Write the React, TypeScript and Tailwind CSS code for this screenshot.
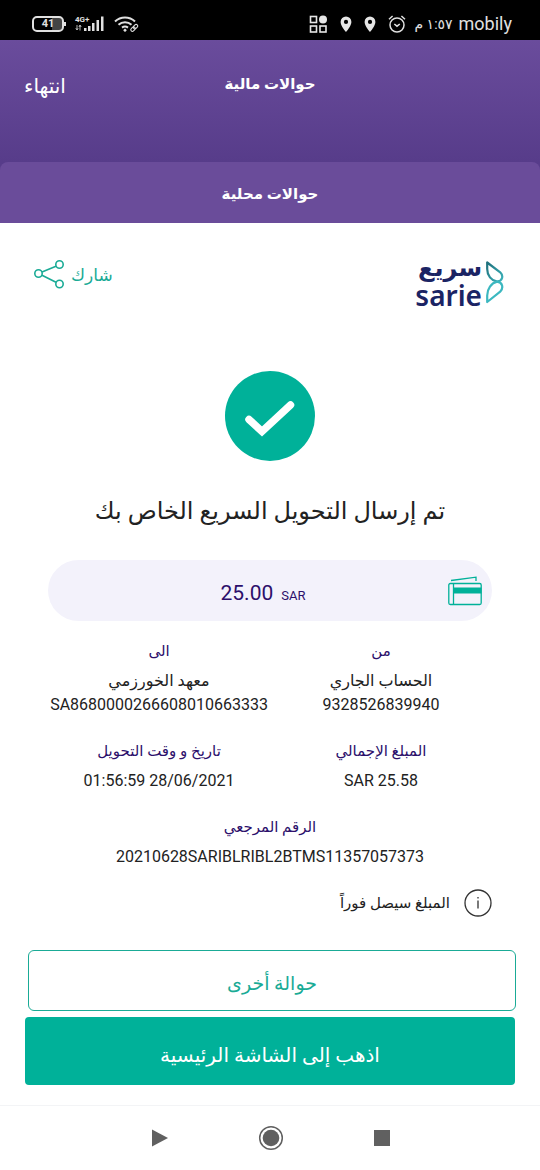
import React from 'react'

const details = [
    { label: 'من', lines: ['الحساب الجاري', '9328526839940'] },
    { label: 'الى', lines: ['معهد الخورزمي', 'SA8680000266608010663333'] },
    { label: 'المبلغ الإجمالي', lines: ['SAR 25.58'] },
    { label: 'تاريخ و وقت التحويل', lines: ['01:56:59 28/06/2021'] },
]

const Pin = () => (
    <svg width="12" height="17" viewBox="0 0 12 17" fill="#e6e6e6" aria-hidden="true">
        <path fillRule="evenodd" d="M6 0.5a5.4 5.4 0 0 0-5.4 5.4C0.6 9.8 6 16 6 16s5.4-6.2 5.4-10.1A5.4 5.4 0 0 0 6 0.5zM6 3.8a2.1 2.1 0 1 1 0 4.2 2.1 2.1 0 0 1 0-4.2z" />
    </svg>
)

const StatusBar = () => (
    <div dir="ltr" className="flex h-10 items-center justify-between bg-black pt-2 pr-7 pl-8 text-[#e0e0e0]">
        <div className="flex items-center gap-2">
            <div className="flex items-center">
                <div className="flex h-4 w-8 items-center justify-center rounded-[5px] border-2 border-[#e0e0e0] bg-linear-to-r from-black from-65% to-[#444] to-65% text-[11px] leading-3 font-bold">
                    41
                </div>
                <div className="h-1 w-0.5 bg-[#e0e0e0]" />
            </div>
            <svg width="32" height="18" viewBox="0 0 32 18" fill="#e0e0e0" aria-hidden="true">
                <text x="1" y="7" fontSize="8" fontWeight="700" fontFamily="Roboto, sans-serif">4G+</text>
                <path d="M3 10v4.500M1.800 13.200L3 15l1.200-1.800M6 15.500v-5M4.900 12L6 10l1.200 2" stroke="#e0e0e0" strokeWidth="0.8" fill="none" />
                <path d="M10 13h2.500v3H10zM14 11h2.500v5H14zM18 8h2.500v8H18zM22.500 5H25v11h-2.500zM27 1.500h2.500V16H27z" />
            </svg>
            <svg width="26" height="18" viewBox="0 0 26 18" fill="none" stroke="#e0e0e0" strokeWidth="2" aria-hidden="true">
                <path d="M1 6.500a14.500 14.500 0 0 1 20 0M4.500 9.800a9.500 9.500 0 0 1 13 0M8 12.600a5 5 0 0 1 6 0" />
                <circle cx="11" cy="15.200" r="1.200" fill="#e0e0e0" strokeWidth="0.5" />
                <g strokeWidth="1.100" transform="rotate(-45 20 13)">
                    <rect x="16" y="11.500" width="5" height="3.200" rx="1.600" />
                    <rect x="19.500" y="11.500" width="5" height="3.200" rx="1.600" />
                </g>
            </svg>
        </div>
        <div className="flex items-center gap-2">
            <div className="flex items-center gap-3">
                <svg width="19" height="18" viewBox="0 0 19 18" fill="none" stroke="#e6e6e6" strokeWidth="1.600" aria-hidden="true">
                    <rect x="1.500" y="1.500" width="6" height="6" />
                    <rect x="1.500" y="11" width="6" height="6" />
                    <rect x="11" y="11" width="6" height="6" />
                    <circle cx="14" cy="4.500" r="4" fill="#e6e6e6" stroke="none" />
                </svg>
                <Pin />
                <Pin />
                <svg width="18" height="18" viewBox="0 0 18 18" fill="none" stroke="#e0e0e0" strokeWidth="1.500" aria-hidden="true">
                    <circle cx="9" cy="10" r="7" />
                    <path d="M6.300 9L9 11.200 11.800 9M1 4.300L4.600 1M17 4.300L13.400 1" />
                </svg>
            </div>
            <div className="flex items-center gap-1.5">
                <span dir="rtl" className="text-[14px] leading-5">١:٥٧ م</span>
                <span className="text-[18px] leading-5">mobily</span>
            </div>
        </div>
    </div>
)

const SarieLogo = () => (
    <div dir="ltr" className="flex items-center gap-1 text-[#1b2464]">
        <div className="flex flex-col items-end gap-1 font-['Noto_Sans','DejaVu_Sans',sans-serif] font-semibold">
            <span className="text-[24px] leading-6 font-bold">سريع</span>
            <span className="text-[28px] leading-6">sarie</span>
        </div>
        <svg width="18" height="48" viewBox="0 -4 18 48" fill="none" strokeWidth="2.200" strokeLinejoin="round" aria-hidden="true">
            <defs>
                <linearGradient id="leaf" x1="0" y1="0" x2="1" y2="1">
                    <stop offset="0" stopColor="#1f6f7b" />
                    <stop offset="1" stopColor="#3cb4bc" />
                </linearGradient>
            </defs>
            <path d="M1.200 1.500V8c0 6.500 4 11.500 10 12.700 5.500-.6 6.500-6 3-9.400z" stroke="url(#leaf)" />
            <path d="M1.200 41v-6.500c0-6.500 4-12.600 10-13.800 5.500.6 6.500 6.500 3 9.900z" stroke="#3cb8c0" />
        </svg>
    </div>
)

const ShareIcon = () => (
    <svg width="31" height="31" viewBox="0 0 31 31" fill="none" stroke="#1aab96" strokeWidth="1.600" aria-hidden="true">
        <circle cx="4.500" cy="13.500" r="3.700" />
        <circle cx="25.500" cy="4.500" r="3.700" />
        <circle cx="25.500" cy="24" r="3.700" />
        <path d="M8 12L22 6.300M8 15.200L22 22.300" />
    </svg>
)

const CardsIcon = () => (
    <svg width="34" height="30" viewBox="0 0 34 30" fill="none" stroke="#00b199" strokeWidth="1.300" aria-hidden="true">
        <path d="M3 4.500L28 1.200V5" />
        <rect x="0.800" y="7.500" width="32.400" height="21" rx="1.500" />
        <path d="M5.500 7.500v21" />
        <path d="M5.500 11.500h28v6h-28z" fill="#00b199" stroke="none" />
    </svg>
)

const NavBar = () => (
    <nav dir="ltr" className="flex h-[65px] items-center justify-center gap-[88px] border-t border-gray-100 pl-0.5">
        <button type="button" aria-label="رجوع">
            <svg width="20" height="20" viewBox="0 0 20 20" fill="#606060">
                <path d="M2 1.500L18 10 2 18.500z" />
            </svg>
        </button>
        <button type="button" aria-label="الرئيسية">
            <svg width="26" height="26" viewBox="0 0 26 26" fill="#606060">
                <circle cx="13" cy="13" r="11.300" fill="none" stroke="#606060" strokeWidth="1.500" />
                <circle cx="13" cy="13" r="8.300" />
            </svg>
        </button>
        <button type="button" aria-label="التطبيقات">
            <svg width="20" height="20" viewBox="0 0 20 20" fill="#606060">
                <rect x="2" y="2" width="16" height="16" />
            </svg>
        </button>
    </nav>
)

const App = () => {
    return (
        <div dir="rtl" lang="ar" className="flex min-h-screen flex-col bg-white font-['Roboto','DejaVu_Sans',sans-serif] text-[#222222]">
            <StatusBar />
            <header className="bg-[#573c8a] text-white">
                <div className="grid h-[122px] grid-cols-3 items-start bg-linear-to-b from-[#6a4c9c] to-[#573c8a] px-6 pt-[30px]">
                    <h1 className="col-start-2 text-center text-[15px] leading-7 font-bold">حوالات مالية</h1>
                    <button type="button" className="justify-self-end text-[20px] leading-8">انتهاء</button>
                </div>
                <h2 className="rounded-t-lg bg-[#6a4c9a] pt-[18px] pb-[15px] text-center text-[15px] leading-7 font-bold">حوالات محلية</h2>
            </header>

            <main className="flex flex-1 flex-col">
                <div className="flex items-start justify-between pt-8 pr-9 pl-[34px]">
                    <SarieLogo />
                    <button type="button" className="mt-1 flex items-center gap-1.5 text-[17px] leading-8 text-[#1aab96]">
                        شارك
                        <ShareIcon />
                    </button>
                </div>

                <svg className="mx-auto mt-16 shrink-0" width="90" height="90" viewBox="0 0 90 90" aria-hidden="true">
                    <circle cx="45" cy="45" r="45" fill="#00b199" />
                    <path d="M24 48.500L37 60.500 65.500 34" fill="none" stroke="#fff" strokeWidth="7.500" strokeLinecap="round" strokeLinejoin="miter" />
                </svg>

                <p className="mt-[30px] text-center text-[24px] leading-10">تم إرسال التحويل السريع الخاص بك</p>

                <div className="mx-12 mt-[29px] flex h-[61px] items-center rounded-full bg-[#f3f2fb] px-2.5 text-[#2c0f6b]">
                    <CardsIcon />
                    <p dir="ltr" className="flex flex-1 items-baseline justify-center gap-2 pt-2 pl-5 text-[21px] leading-7">
                        25.00 <span className="text-[13px]">SAR</span>
                    </p>
                </div>

                <dl className="mx-12 mt-4 grid grid-cols-2 gap-y-5 text-center text-[16px] leading-6">
                    {details.map((item) => (
                        <div key={item.label} className="flex flex-col items-center">
                            <dt className="mb-1 text-[15px] leading-7 text-[#2c0f6b]">{item.label}</dt>
                            {item.lines.map((line) => (
                                <dd key={line} dir="auto" className="whitespace-nowrap">{line}</dd>
                            ))}
                        </div>
                    ))}
                    <div className="col-span-2">
                        <dt className="mb-1 text-[15px] leading-7 text-[#2c0f6b]">الرقم المرجعي</dt>
                        <dd dir="ltr">20210628SARIBLRIBL2BTMS11357057373</dd>
                    </div>
                </dl>

                <div className="mx-12 mt-5 flex items-center gap-3.5 text-[15px] leading-7">
                    <svg width="28" height="28" viewBox="0 0 28 28" fill="none" stroke="#333" strokeWidth="1.300" aria-hidden="true">
                        <circle cx="14" cy="14" r="13" />
                        <path d="M14 11.500v8M14 8v1.600" />
                    </svg>
                    <p>المبلغ سيصل فوراً</p>
                </div>

                <div className="mt-[33px] flex flex-col gap-1.5 pb-5 text-[19px]">
                    <button type="button" className="mr-6 ml-7 h-[61px] rounded-md border border-[#1aab96] pt-2 text-[#1aab96]">حوالة أخرى</button>
                    <button type="button" className="mx-[25px] h-[68px] rounded-sm bg-[#00b199] pt-2 text-[20px] text-white">اذهب إلى الشاشة الرئيسية</button>
                </div>
            </main>

            <NavBar />
        </div>
    )
}

export default App
